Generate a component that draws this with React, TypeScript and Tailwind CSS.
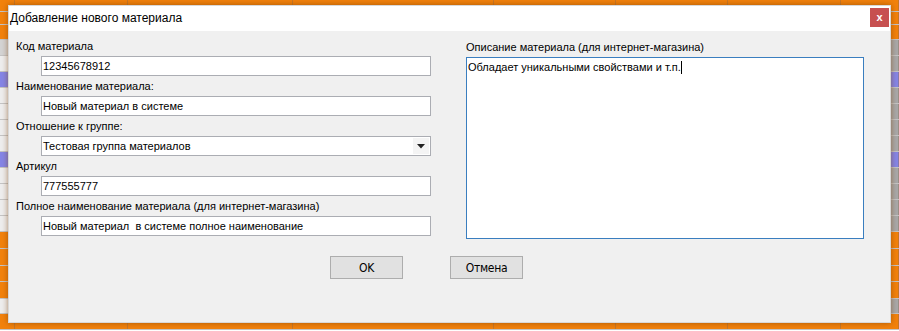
import React from "react";

const O = "bg-[#f2820c]";
const W = "bg-[#eeeeee]";
const G = "bg-[#a9a9a9]";
const B = "bg-[#8585e6]";
const L = "bg-[#d4d4d4]";

const rows: { h: string; l: string; r: string; mid: string; t?: string }[] = [
  { h: "h-[12px]", l: O, r: O, mid: O },
  { h: "h-[13px]", l: O, r: O, mid: O },
  { h: "h-[15px]", l: O, r: O, mid: O },
  { h: "h-[16px]", l: L, r: G, mid: W },
  { h: "h-[16px]", l: W, r: G, mid: W },
  { h: "h-[16px]", l: B, r: B, mid: W, t: "9" },
  { h: "h-[16px]", l: W, r: G, mid: W },
  { h: "h-[16px]", l: W, r: G, mid: W },
  { h: "h-[16px]", l: W, r: G, mid: W },
  { h: "h-[16px]", l: W, r: G, mid: W },
  { h: "h-[16px]", l: B, r: B, mid: W },
  { h: "h-[16px]", l: W, r: G, mid: W },
  { h: "h-[16px]", l: W, r: G, mid: W },
  { h: "h-[16px]", l: W, r: G, mid: W },
  { h: "h-[16px]", l: W, r: G, mid: W },
  { h: "h-[17px]", l: O, r: O, mid: O },
  { h: "h-[17px]", l: O, r: O, mid: O },
  { h: "h-[16px]", l: O, r: O, mid: O },
  { h: "h-[17px]", l: O, r: O, mid: O },
  { h: "h-[15px]", l: W, r: G, mid: W },
  { h: "h-[16px]", l: O, r: O, mid: O },
];

const cols = [15, 113, 165, 201, 122, 112, 113, 58];

function Field({ label, value, combo }: { label: string; value: string; combo?: boolean }) {
  return (
    <div className="flex flex-col">
      <div className="h-[20px] leading-[20px] text-[11px] whitespace-nowrap">{label}</div>
      <div className="ml-[25px] w-[390px] h-[20px] bg-white border border-[#abadb3] flex items-center pl-[1px] text-[11px] whitespace-pre relative">
        <span>{value}</span>
        {combo && (
          <div className="absolute right-[1px] top-[1px] bottom-[1px] w-[16px] bg-[#f4f4f4] flex items-center justify-center">
            <svg width="8" height="5" viewBox="0 0 8 5">
              <path d="M0 0 L8 0 L4 4.5 Z" fill="#222" />
            </svg>
          </div>
        )}
      </div>
    </div>
  );
}

export default function App() {
  return (
    <div className="relative w-[899px] h-[331px] overflow-hidden font-['Liberation_Sans',Arial,sans-serif] text-black">
      {/* background spreadsheet */}
      <div className="flex flex-col w-full h-full">
        {rows.map((r, i) => (
          <div key={i} className={`flex ${r.h} border-b border-[#8a8a8a]/50 shrink-0`}>
            {cols.map((w, j) => (
              <div
                key={j}
                style={{ width: w }}
                className={`${j === 0 ? r.l : j === cols.length - 1 ? r.r : r.mid} border-r border-[#8a6a50]/40 h-full text-[12px] leading-[15px] text-[#111] pl-[1px]`}
              >
                {j === cols.length - 1 && r.t ? r.t : ""}
              </div>
            ))}
          </div>
        ))}
      </div>

      {/* dialog */}
      <div className="absolute left-[8px] top-[5px] w-[883px] h-[318px] flex flex-col bg-[#f0f0f0] shadow-[0_0_6px_rgba(120,60,0,0.6)] border border-[#d8d8d8]">
        <div className="h-[25px] bg-white flex items-center pl-[1px] pb-[1px] text-[12px] relative shrink-0">
          <span>Добавление нового материала</span>
          <div className="absolute right-[1px] top-[2px] w-[19px] h-[19px] bg-[#c75050] flex items-center justify-center text-white text-[11px] font-bold leading-none">
            x
          </div>
        </div>
        <div className="flex flex-col pt-[5px] pl-[7px]">
          <div className="flex">
            <div className="flex flex-col w-[450px]">
              <Field label="Код материала" value="12345678912" />
              <Field label="Наименование материала:" value="Новый материал в системе" />
              <Field label="Отношение к группе:" value="Тестовая группа материалов" combo />
              <Field label="Артикул" value="777555777" />
              <Field label="Полное наименование материала (для интернет-магазина)" value="Новый материал  в системе полное наименование" />
            </div>
            <div className="flex flex-col mt-[1px]">
              <div className="h-[20px] leading-[20px] text-[11px] whitespace-nowrap">Описание материала (для интернет-магазина)</div>
              <div className="w-[398px] h-[182px] bg-white border border-[#3a7ebf] pl-[1px] pt-[2px] text-[11px] leading-[14px] whitespace-pre">
                Обладает уникальными свойствами и т.п.<span className="inline-block w-[1px] h-[13px] bg-black align-[-3px]"></span>
              </div>
            </div>
          </div>
          <div className="flex gap-[47px] pl-[314px] mt-[17px]">
            <div className="w-[73px] h-[23px] bg-[#e1e1e1] border border-[#adadad] flex items-center justify-center text-[12px] font-['DejaVu_Sans_Condensed','DejaVu_Sans',sans-serif] tracking-[-0.3px]">
              OK
            </div>
            <div className="w-[73px] h-[23px] bg-[#e1e1e1] border border-[#adadad] flex items-center justify-center text-[12px] font-['DejaVu_Sans_Condensed','DejaVu_Sans',sans-serif] tracking-[-0.3px]">
              Отмена
            </div>
          </div>
        </div>
      </div>
    </div>
  );
}
